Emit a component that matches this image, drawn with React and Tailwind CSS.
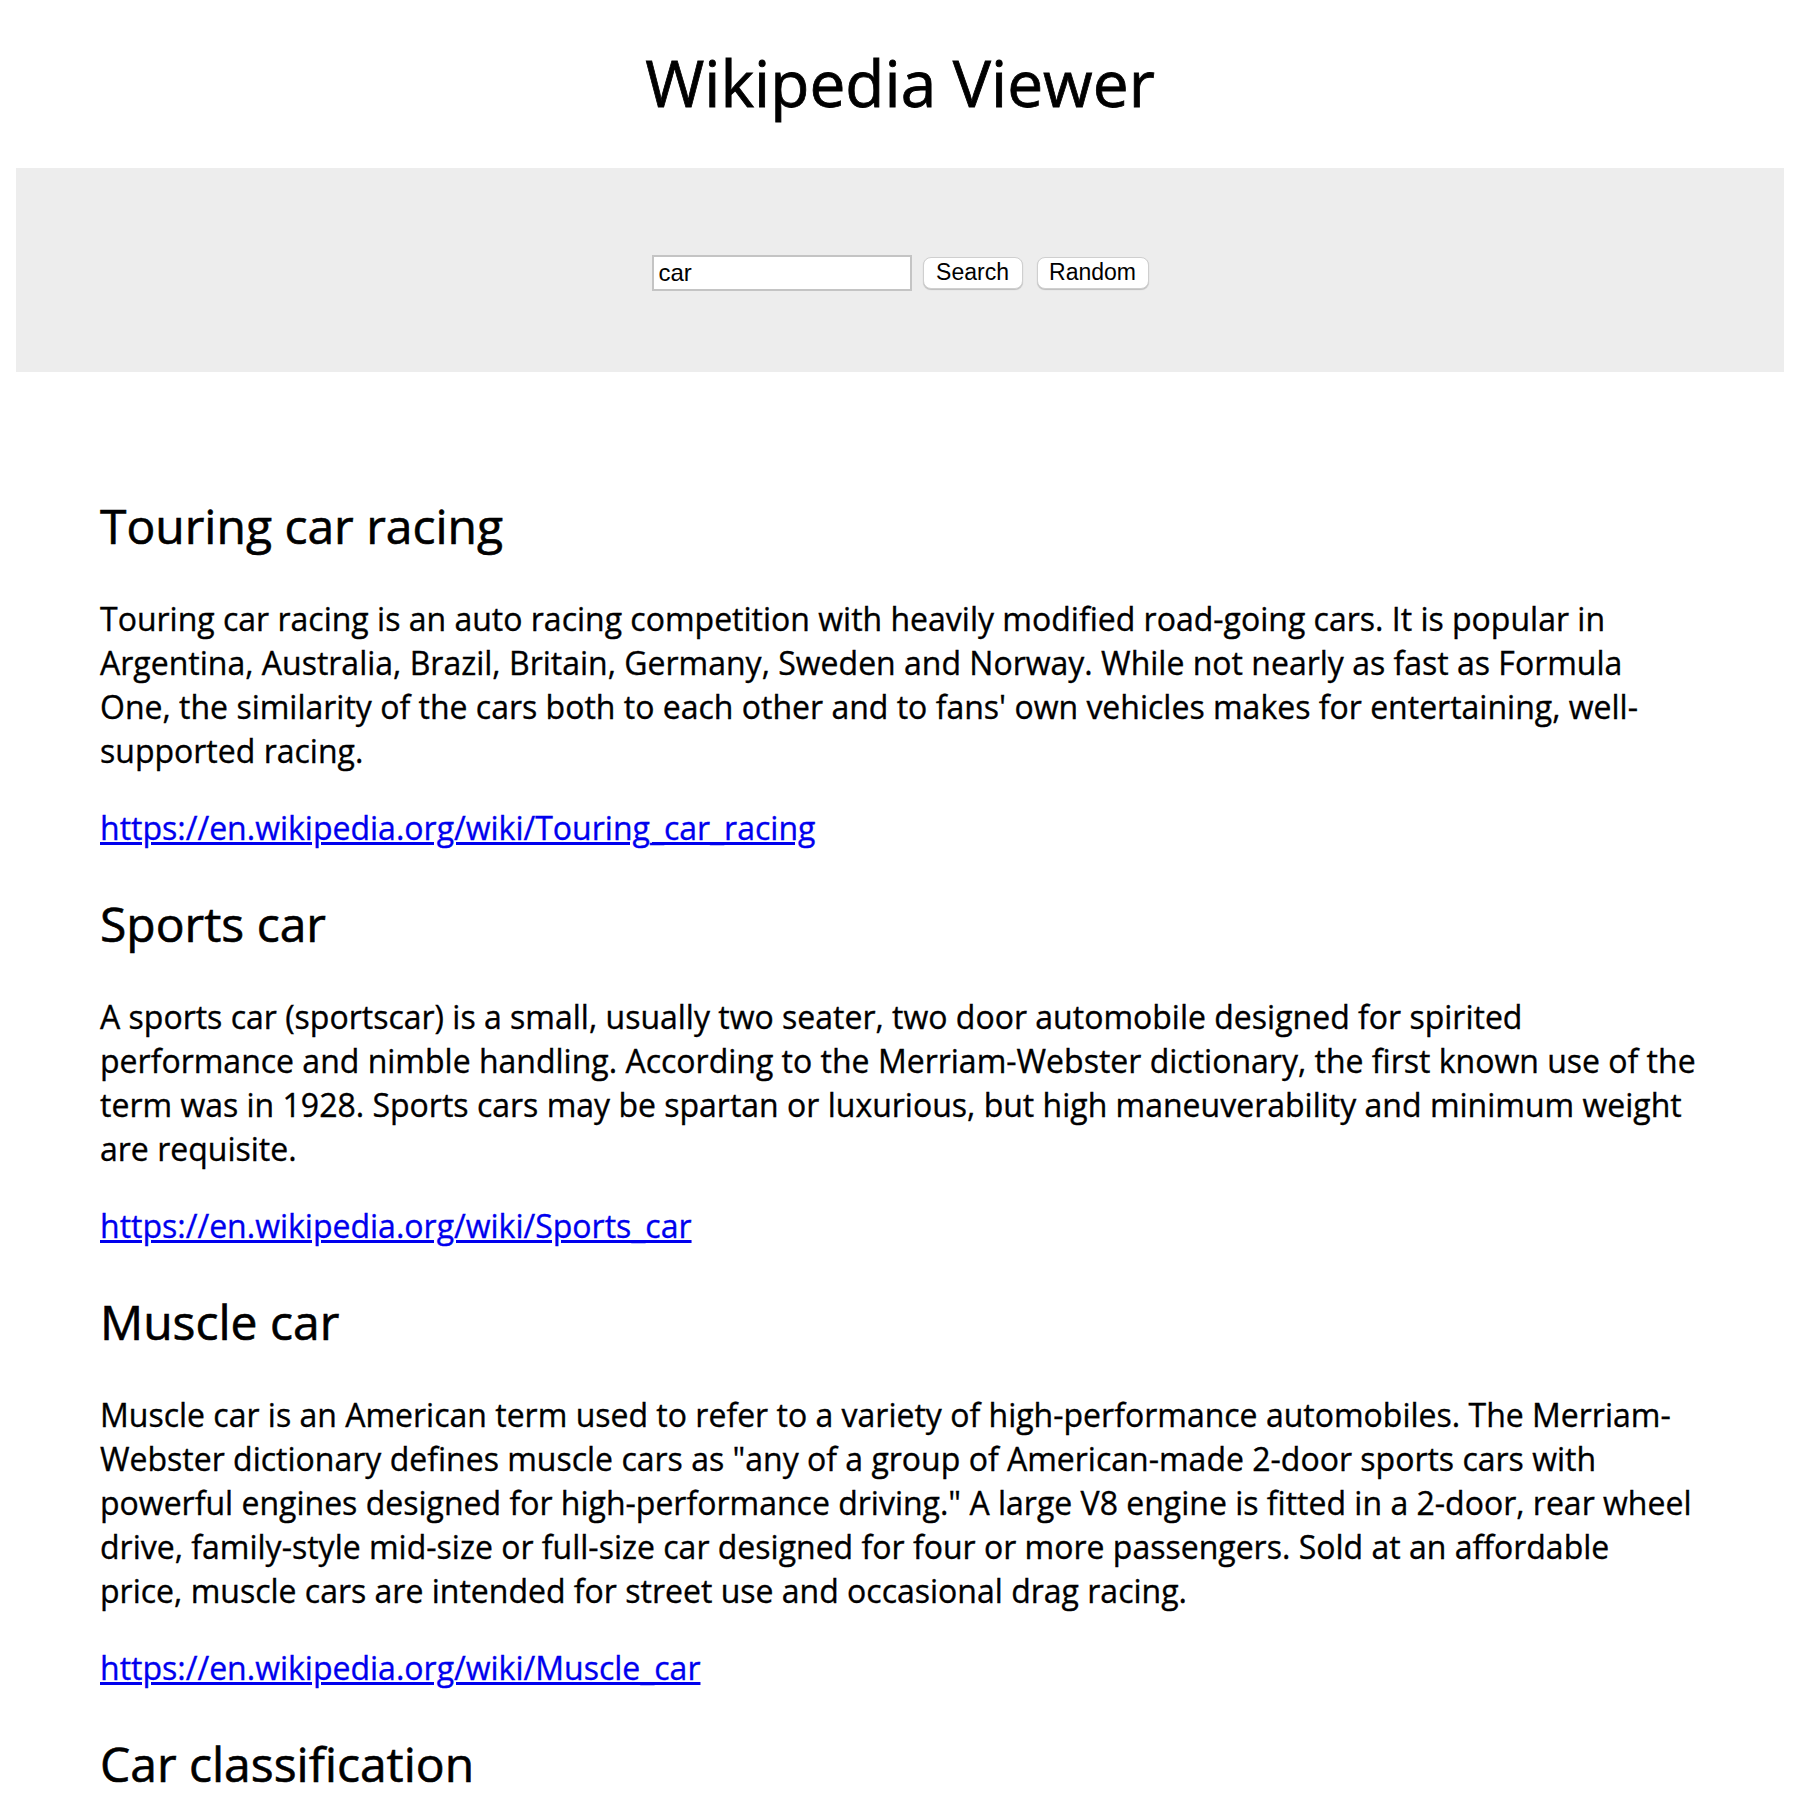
const results = [
  {
    title: "Touring car racing",
    extract:
      "Touring car racing is an auto racing competition with heavily modified road-going cars. It is popular in Argentina, Australia, Brazil, Britain, Germany, Sweden and Norway. While not nearly as fast as Formula One, the similarity of the cars both to each other and to fans' own vehicles makes for entertaining, well-supported racing.",
  },
  {
    title: "Sports car",
    extract:
      "A sports car (sportscar) is a small, usually two seater, two door automobile designed for spirited performance and nimble handling. According to the Merriam-Webster dictionary, the first known use of the term was in 1928. Sports cars may be spartan or luxurious, but high maneuverability and minimum weight are requisite.",
  },
  {
    title: "Muscle car",
    extract:
      'Muscle car is an American term used to refer to a variety of high-performance automobiles. The Merriam-Webster dictionary defines muscle cars as "any of a group of American-made 2-door sports cars with powerful engines designed for high-performance driving." A large V8 engine is fitted in a 2-door, rear wheel drive, family-style mid-size or full-size car designed for four or more passengers. Sold at an affordable price, muscle cars are intended for street use and occasional drag racing.',
  },
  {
    title: "Car classification",
    extract:
      "Car classification is a subjective process, as many vehicles fall into more than one category and the naming of categories differs between countries and markets.",
  },
];

function Result({ title, extract }) {
  const url = "https://en.wikipedia.org/wiki/" + title.replace(/ /g, "_");
  return (
    <div className="mb-[41px]">
      <h2 className="text-[48px] leading-[66px] font-normal text-black [-webkit-text-stroke:0.6px]">
        {title}
      </h2>
      <p className="mt-[38px] text-[32px] leading-[44px] text-black">{extract}</p>
      <p className="mt-[33px] text-[32px] leading-[44px]">
        <a href={url} className="text-[#0000ee] underline">
          {url}
        </a>
      </p>
    </div>
  );
}

export default function App() {
  return (
    <div className="min-h-screen bg-white font-['Open_Sans',sans-serif] text-black [-webkit-text-stroke:0.35px]">
      <h1 className="pt-[39px] mb-[42px] text-center text-[64px] leading-[87px] font-normal [-webkit-text-stroke:0.8px]">
        Wikipedia Viewer
      </h1>

      <div className="mx-[16px] h-[204px] bg-[#ededed] flex items-center justify-center pt-[5px] font-['Liberation_Sans',Helvetica,Arial,sans-serif] [-webkit-text-stroke:0px]">
        <input
          type="text"
          defaultValue="car"
          className="w-[260px] h-[36px] bg-white border-2 border-[#c4c4c4] px-[5px] text-[24px] text-black outline-none"
        />
        <button
          type="button"
          className="ml-[11px] w-[100px] h-[32px] rounded-[8px] bg-white border border-[#cfcfcf] shadow-[0_1px_1px_rgba(0,0,0,0.2)] text-[23px] leading-none text-black"
        >
          Search
        </button>
        <button
          type="button"
          className="ml-[14px] w-[112px] h-[32px] rounded-[8px] bg-white border border-[#cfcfcf] shadow-[0_1px_1px_rgba(0,0,0,0.2)] text-[23px] leading-none text-black"
        >
          Random
        </button>
      </div>

      <div className="pl-[100px] pr-[103px] pt-[121px]">
        {results.map((r) => (
          <Result key={r.title} title={r.title} extract={r.extract} />
        ))}
      </div>
    </div>
  );
}
